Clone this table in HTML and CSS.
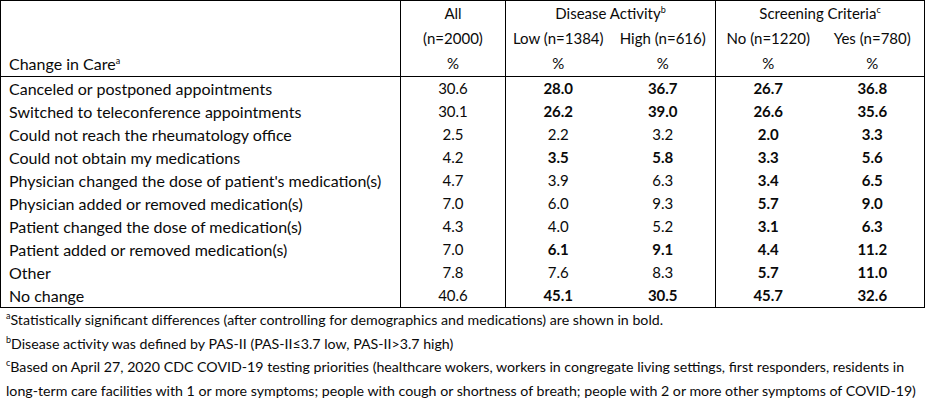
FILE: index.html
```html
<!DOCTYPE html>
<html lang="en">
<head>
<meta charset="utf-8">
<title>Change in Care</title>
<link rel="stylesheet" href="styles.css">
</head>
<body>
<div class="page">
  <table class="care">
    <colgroup>
      <col class="c-label">
      <col class="c-num">
      <col class="c-num">
      <col class="c-num">
      <col class="c-num">
      <col class="c-num-last">
    </colgroup>
    <thead>
      <tr class="h1">
        <th rowspan="3" class="label-head">Change in Care<sup>a</sup></th>
        <th class="sep">All</th>
        <th colspan="2" class="sep">Disease Activity<sup>b</sup></th>
        <th colspan="2">Screening Criteria<sup>c</sup></th>
      </tr>
      <tr class="h2">
        <th class="sep">(n=2000)</th>
        <th>Low (n=1384)</th>
        <th class="sep">High (n=616)</th>
        <th>No (n=1220)</th>
        <th>Yes (n=780)</th>
      </tr>
      <tr class="h3">
        <th class="sep">%</th>
        <th>%</th>
        <th class="sep">%</th>
        <th>%</th>
        <th>%</th>
      </tr>
    </thead>
    <tbody>
      <tr><td class="lbl">Canceled or postponed appointments</td><td class="sep">30.6</td><td class="b">28.0</td><td class="sep b">36.7</td><td class="b">26.7</td><td class="b">36.8</td></tr>
      <tr><td class="lbl">Switched to teleconference appointments</td><td class="sep">30.1</td><td class="b">26.2</td><td class="sep b">39.0</td><td class="b">26.6</td><td class="b">35.6</td></tr>
      <tr><td class="lbl">Could not reach the rheumatology office</td><td class="sep">2.5</td><td>2.2</td><td class="sep">3.2</td><td class="b">2.0</td><td class="b">3.3</td></tr>
      <tr><td class="lbl">Could not obtain my medications</td><td class="sep">4.2</td><td class="b">3.5</td><td class="sep b">5.8</td><td class="b">3.3</td><td class="b">5.6</td></tr>
      <tr><td class="lbl">Physician changed the dose of patient's medication(s)</td><td class="sep">4.7</td><td>3.9</td><td class="sep">6.3</td><td class="b">3.4</td><td class="b">6.5</td></tr>
      <tr><td class="lbl">Physician added or removed medication(s)</td><td class="sep">7.0</td><td>6.0</td><td class="sep">9.3</td><td class="b">5.7</td><td class="b">9.0</td></tr>
      <tr><td class="lbl">Patient changed the dose of medication(s)</td><td class="sep">4.3</td><td>4.0</td><td class="sep">5.2</td><td class="b">3.1</td><td class="b">6.3</td></tr>
      <tr><td class="lbl">Patient added or removed medication(s)</td><td class="sep">7.0</td><td class="b">6.1</td><td class="sep b">9.1</td><td class="b">4.4</td><td class="b">11.2</td></tr>
      <tr><td class="lbl">Other</td><td class="sep">7.8</td><td>7.6</td><td class="sep">8.3</td><td class="b">5.7</td><td class="b">11.0</td></tr>
      <tr><td class="lbl">No change</td><td class="sep">40.6</td><td class="b">45.1</td><td class="sep b">30.5</td><td class="b">45.7</td><td class="b">32.6</td></tr>
    </tbody>
  </table>
  <div class="notes">
    <p><sup>a</sup>Statistically significant differences (after controlling for demographics and medications) are shown in bold.</p>
    <p><sup>b</sup>Disease activity was defined by PAS-II (PAS-II≤3.7 low, PAS-II&gt;3.7 high)</p>
    <p><sup>c</sup>Based on April 27, 2020 CDC COVID-19 testing priorities (healthcare wokers, workers in congregate living settings, first responders, residents in<br>long-term care facilities with 1 or more symptoms; people with cough or shortness of breath; people with 2 or more other symptoms of COVID-19)</p>
  </div>
</div>
</body>
</html>
```

FILE: styles.css
```css
html, body {
  margin: 0;
  padding: 0;
  background: #fff;
}

body {
  font-family: "Lato", "Liberation Sans", sans-serif;
  font-size: 15px;
  color: #0a0a0a;
}

.page {
  width: 926px;
}

.care {
  border-collapse: collapse;
  table-layout: fixed;
  width: 925px;
  border: 1px solid #000;
}

.c-label { width: 400px; }
.c-num { width: 105px; }
.c-num-last { width: 104px; }

.care th {
  font-weight: normal;
  text-align: center;
  padding: 0;
  height: 25px;
  line-height: 25px;
  vertical-align: middle;
  white-space: nowrap;
}

.care thead tr.h3 th {
  border-bottom: 1px solid #000;
}

.care th.label-head {
  text-align: left;
  vertical-align: bottom;
  padding-left: 8px;
  font-size: 16px;
  border-right: 1px solid #000;
  border-bottom: 1px solid #000;
}

.care td {
  padding: 0;
  height: 23px;
  line-height: 23px;
  text-align: center;
  white-space: nowrap;
}

.care td.lbl {
  text-align: left;
  padding-left: 8px;
  font-size: 16px;
  border-right: 1px solid #000;
}

.care .sep {
  border-right: 1px solid #000;
}

.care td.b {
  font-weight: bold;
}

sup {
  font-size: 9px;
  line-height: 0;
  vertical-align: 6px;
}

.notes {
  padding-left: 6px;
  padding-top: 0;
  font-size: 14.2px;
}

.notes p {
  margin: 0;
  line-height: 23.5px;
  white-space: nowrap;
}
```
